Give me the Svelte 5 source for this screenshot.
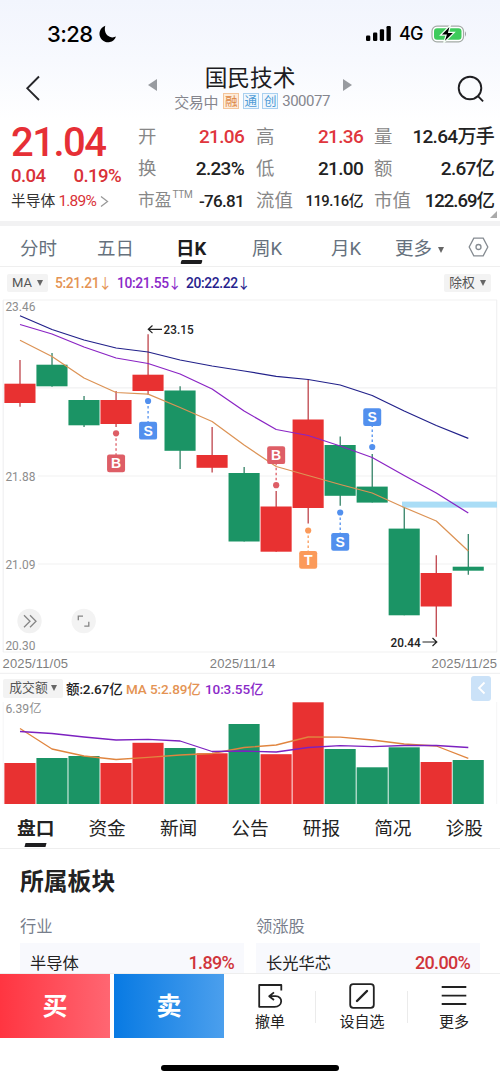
<script>
  const RED = '#e83131';
  const GREEN = '#1b9465';
  const cx = (i) => 20 + i * 32.02;

  // [color, open/close top, bottom, high, low, volume top]
  const candles = [
    [RED, 383.7, 403, 360, 406.7, 763],
    [GREEN, 364.7, 386.3, 353, 386.7, 758],
    [GREEN, 400, 425.3, 396, 427, 756],
    [RED, 400, 424, 391, 427, 763],
    [RED, 374.7, 391, 334.3, 394.7, 742.8],
    [GREEN, 390.5, 450.8, 386.3, 469, 748],
    [RED, 455, 467.8, 427, 472.5, 753.3],
    [GREEN, 473, 541.5, 467, 541.5, 724],
    [RED, 506.5, 551.7, 491, 551.7, 754.2],
    [RED, 419.5, 508, 379, 523.5, 702.3],
    [GREEN, 445, 495.8, 436.5, 505.7, 749],
    [GREEN, 486.6, 502.6, 454, 502.6, 767.3],
    [GREEN, 528.6, 615.3, 507.3, 615.3, 747.3],
    [RED, 573, 606.5, 555.3, 636.8, 762],
    [GREEN, 566.7, 570.7, 534, 574.7, 760]
  ];

  const line = (ys) => ys.map((y, i) => `${cx(i).toFixed(1)},${y}`).join(' ');
  const ma20 = line([315.7, 329.5, 340, 348, 352, 360, 366, 371, 376.3, 379.5, 385, 395.5, 411, 425.5, 438.3]);
  const ma10 = line([324.5, 334, 347, 358, 363.5, 374, 389, 411, 429.5, 435.5, 446, 457.5, 475.5, 493, 513]);
  const ma5 = line([340.3, 356.5, 378, 392.5, 394.2, 407.5, 421.5, 445, 466.5, 475.5, 484.5, 493, 507.5, 521, 551]);
  const vol5 = line([728.5, 749, 756, 759.5, 757.3, 755, 753.5, 747.5, 745, 737, 737.2, 740, 744, 746, 758.3]);
  const vol10 = line([731.5, 733.5, 737, 740, 739.3, 741, 751.5, 751, 752, 747.5, 745.7, 746.7, 745.5, 745.5, 747.5]);

  // letter, candle index, box top, dot y, color
  const marks = [
    ['B', 3, 454.4, 433.3, '#de5e66'],
    ['S', 4, 421.8, 401, '#5290ee'],
    ['B', 8, 446.3, 485.2, '#de5e66'],
    ['T', 9, 551, 530.5, '#fb9a5a'],
    ['S', 10, 533, 512.5, '#5290ee'],
    ['S', 11, 408.2, 447, '#5290ee']
  ];

  const prices = [['23.46', 311], ['21.88', 480.7], ['21.09', 568.9], ['20.30', 650.2]];
  const infoTabs = ['盘口', '资金', '新闻', '公告', '研报', '简况', '诊股'];
</script>

<div class="page">
  <div class="status">
    <span class="time">3:28</span>
    <svg class="moon" width="18" height="18" viewBox="0 0 18 18"><path d="M6.3 .7A8.5 8.5 0 1 0 17 11.6C11.5 14.5 3.8 9.5 6.3 .7Z" fill="#000"/></svg>
    <svg class="signal" width="27" height="17" viewBox="0 0 27 17"><rect x="1" y="10.5" width="4.3" height="5.5" rx="1.2"/><rect x="8" y="7.5" width="4.3" height="8.5" rx="1.2"/><rect x="14.8" y="4.3" width="4.3" height="11.7" rx="1.2"/><rect x="21.5" y="1" width="4.3" height="15" rx="1.2"/></svg>
    <span class="net">4G</span>
    <svg class="battery" width="37" height="20" viewBox="0 0 37 20"><rect x="1" y="2.2" width="31.5" height="15.6" rx="5" fill="#fff" stroke="#a3aaa5" stroke-width="1.2"/><rect x="3" y="4.2" width="27.5" height="11.6" rx="3" fill="#3ecb5c"/><path d="M34 7.3q2 2.7 0 5.4Z" fill="#9a9fa2"/><path d="M19.5 1 9.5 11.2h5.6L12.6 19 23.3 8.4h-5.6Z" fill="#000" stroke="#f4fff6" stroke-width="1.2"/></svg>
  </div>

  <header>
    <svg class="back" width="16" height="28" viewBox="0 0 16 28"><path d="M14 2.5 2.3 14.3 14 26" fill="none" stroke="#26262a" stroke-width="1.9"/></svg>
    <i class="prev"></i>
    <div class="title">
      <h1>国民技术</h1>
      <p><span>交易中</span><b class="tag orange">融</b><b class="tag">通</b><b class="tag">创</b><span class="code">300077</span></p>
    </div>
    <i class="next"></i>
    <svg class="search" width="28" height="28" viewBox="0 0 28 28" fill="none" stroke="#1f1f22" stroke-width="1.9"><circle cx="13" cy="13" r="11.3"/><path d="m20.7 20.8 5.4 5.5"/></svg>
  </header>

  <section class="quote">
    <div class="last">
      <strong>21.04</strong>
      <div class="change"><span>0.04</span><span>0.19%</span></div>
      <div class="industry">半导体<em>1.89%</em><svg width="9" height="13" viewBox="0 0 9 13"><path d="m1 1.5 6.5 5L1 11.5" fill="none" stroke="#999" stroke-width="1.3"/></svg></div>
    </div>
    <dl class="c1">
      <div><dt>开</dt><dd class="up">21.06</dd></div>
      <div><dt>换</dt><dd>2.23%</dd></div>
      <div><dt class="pe">市盈<sup>TTM</sup></dt><dd class="mid">-76.81</dd></div>
    </dl>
    <dl class="c2">
      <div><dt>高</dt><dd class="up">21.36</dd></div>
      <div><dt>低</dt><dd>21.00</dd></div>
      <div><dt>流值</dt><dd class="small">119.16亿</dd></div>
    </dl>
    <dl class="c3">
      <div><dt>量</dt><dd>12.64万手</dd></div>
      <div><dt>额</dt><dd>2.67亿</dd></div>
      <div><dt>市值</dt><dd class="cap">122.69亿</dd></div>
    </dl>
    <i class="corner"></i>
  </section>

  <nav class="periods">
    <span>分时</span><span>五日</span><span class="active">日K</span><span>周K</span><span>月K</span>
    <span class="more">更多 <i class="tri"></i></span>
    <svg width="21" height="20" viewBox="0 0 21 20" fill="none" stroke="#858b91" stroke-width="1.3"><path d="M5.8 1.2h9.4L19.8 10l-4.6 8.8H5.8L1.2 10Z"/><circle cx="10.5" cy="10" r="2.5"/></svg>
  </nav>

  <div class="indicator">
    <span class="chip ma">MA<i class="tri"></i></span>
    <span class="v5">5:21.21<u>↓</u></span><span class="v10">10:21.55<u>↓</u></span><span class="v20">20:22.22<u>↓</u></span>
    <span class="chip right">除权<i class="tri"></i></span>
  </div>

  <svg class="chart" width="500" height="375" viewBox="0 299 500 375">
    <g stroke="#f1f1f2" stroke-width="1.2">
      <path d="M3 300H497M3 387.8H497M38 476H497M38 564H497M3 652H497M0 673.4H500M3.2 300V652M496.7 300V652" fill="none"/>
    </g>
    {#each prices as [text, y]}
      <text class="axis" x="5.4" {y} textLength="30" lengthAdjust="spacingAndGlyphs">{text}</text>
    {/each}
    <rect x="402" y="501.6" width="95" height="6" fill="#aaddf6"/>
    {#each candles as [color, top, bottom, high, low], i}
      <path d="M{cx(i)} {high}V{low}" stroke={color === RED ? '#b9343c' : '#23785a'} stroke-width="1.2"/>
      <rect x={cx(i) - 15.6} y={top} width="31.1" height={bottom - top} fill={color}/>
    {/each}
    <g fill="none" stroke-width="1.25" stroke-linejoin="round">
      <polyline points={ma20} stroke="#22218a"/>
      <polyline points={ma10} stroke="#8a24c4"/>
      <polyline points={ma5} stroke="#dc9355"/>
    </g>
    {#each marks as [letter, i, top, dot, color]}
      <path d="M{cx(i)} {dot}V{top + 9}" stroke={color} stroke-width="1.3" stroke-dasharray="2.5 2.5"/>
      <circle cx={cx(i)} cy={dot} r="3.1" fill={color}/>
      <rect x={cx(i) - 9} y={top} width="18" height="17.8" rx="2.2" fill={color}/>
      <text class="mark" x={cx(i)} y={top + 14}>{letter}</text>
    {/each}
    <g fill="none" stroke="#222" stroke-width="1.2">
      <path d="M162 329.3H148.5M152.5 325.5L148.3 329.3L152.5 333.1"/>
      <path d="M422.5 642H436.5M432.5 638L436.8 642L432.5 646"/>
    </g>
    <text class="extreme" x="163.6" y="333.6" textLength="30" lengthAdjust="spacingAndGlyphs">23.15</text>
    <text class="extreme" x="390.6" y="646.7" textLength="30" lengthAdjust="spacingAndGlyphs">20.44</text>
    <circle cx="29.5" cy="621" r="12.2" fill="#f1f1f1"/><circle cx="83.7" cy="621" r="12.2" fill="#f3f3f3"/>
    <g fill="none" stroke="#858585" stroke-width="1.3">
      <path d="m24 615.2 6 6-6 6m6-12 6 6-6 6"/>
      <path d="M78.3 620.2V616.2H83M84.3 626.2H88.8V621.8"/>
    </g>
    <g class="date">
      <text x="2.5" y="667.8" textLength="65.5">2025/11/05</text>
      <text x="209.8" y="667.8" textLength="65.5">2025/11/14</text>
      <text x="431.6" y="667.8" textLength="65.5">2025/11/25</text>
    </g>
  </svg>

  <div class="volbar">
    <span class="chip vol">成交额<i class="tri"></i></span>
    <b>额:2.67亿</b><span class="v5">MA 5:2.89亿</span><span class="v10">10:3.55亿</span>
    <button aria-label="收起"><svg width="9" height="14" viewBox="0 0 9 14"><path d="M7.5 1.5 2 7l5.5 5.5" fill="none" stroke="#fff" stroke-width="1.8"/></svg></button>
  </div>

  <svg class="volume" width="500" height="102" viewBox="0 702 500 102">
    <path d="M3.2 702V804M496.7 702V804" stroke="#f5f5f6"/>
    <text class="axis" x="5.4" y="713.3" textLength="36" lengthAdjust="spacingAndGlyphs">6.39亿</text>
    {#each candles as [color, , , , , top], i}
      <rect x={cx(i) - 15.6} y={top} width="31.1" height={804 - top} fill={color}/>
    {/each}
    <g fill="none" stroke-width="1.3" stroke-linejoin="round">
      <polyline points={vol5} stroke="#e0853f"/>
      <polyline points={vol10} stroke="#7c21c0"/>
    </g>
  </svg>

  <nav class="info">
    {#each infoTabs as tab, i}<span class:active={i === 0}>{tab}</span>{/each}
  </nav>

  <section class="sector">
    <h2>所属板块</h2>
    <div class="cols">
      <div><h3>行业</h3><p><span>半导体</span><em>1.89%</em></p></div>
      <div><h3>领涨股</h3><p><span>长光华芯</span><em>20.00%</em></p></div>
    </div>
  </section>

  <footer>
    <div class="actions">
      <div class="buy">买</div>
      <div class="sell">卖</div>
      <div class="tool t1">
        <svg width="26" height="26" viewBox="0 0 26 26" fill="none" stroke="#222" stroke-width="1.8"><path d="M24.3 7.5V2H2.2v21.8h15.3c8.5 0 9-10.6 1-10.6h-6m4.5-3.8-4.8 3.8 4.8 3.8" stroke-linejoin="round"/></svg>
        <span>撤单</span>
      </div>
      <div class="tool t2">
        <svg width="26" height="26" viewBox="0 0 26 26" fill="none" stroke="#222" stroke-width="1.8"><rect x="1.2" y="1.2" width="23.6" height="23.6" rx="3"/><path d="m8 18 10-10" stroke-width="2.4" stroke-linecap="round"/></svg>
        <span>设自选</span>
      </div>
      <div class="tool t3">
        <svg width="26" height="26" viewBox="0 0 26 26" fill="none" stroke="#222" stroke-width="1.9"><path d="M.7 4H25.3M.7 12.6h24.6M.7 21h24.6"/></svg>
        <span>更多</span>
      </div>
    </div>
    <div class="home"></div>
  </footer>
</div>

<style>
  :global(body) { margin: 0; background: #fff; }
  .page { width: 500px; height: 1082px; overflow: hidden; display: flex; flex-direction: column; background: linear-gradient(#f2f5fd 0, #f7f9fe 60px, #fff 125px); color: #222; font-family: Roboto, "Noto Sans CJK SC", sans-serif; }
  .page > * { flex-shrink: 0; box-sizing: border-box; }
  h1, h2, h3, p, dl, dd { margin: 0; font-weight: 400; }
  em { font-style: normal; }
  svg { display: block; flex-shrink: 0; }

  .status { height: 67px; display: flex; align-items: center; padding-left: 47px; color: #000; }
  .time { width: 47px; font: 500 22px/24px Inter, sans-serif; letter-spacing: -.6px; }
  .moon { margin-left: 5px; }
  .signal { margin-left: 248px; fill: #000; }
  .net { margin-left: 7px; width: 32px; font: 500 18px/20px Inter, sans-serif; letter-spacing: -.8px; }

  header { height: 53px; display: flex; align-items: flex-start; padding-left: 25px; }
  .back { margin-top: 7px; }
  .prev, .next { width: 0; height: 0; margin-top: 12px; border: solid transparent; border-width: 6.5px 0; }
  .prev { margin-left: 107px; border-right: 9px solid #989ba0; }
  .title { width: 190px; display: flex; flex-direction: column; align-items: center; }
  .next { border-left: 9px solid #989ba0; margin-left: -4px; }
  .search { margin-left: 105px; margin-top: 8px; }
  h1 { font-size: 22.7px; line-height: 24px; margin: 0 4px 0 0; font-weight: 400; color: #1c1c22; }
  .title p { display: flex; align-items: center; height: 20px; font-size: 15px; color: #85868e; letter-spacing: -.3px; }
  .tag { box-sizing: border-box; width: 16px; height: 16px; margin-left: 3.5px; border: 1px solid #a9d0f0; background: #f0f7fd; color: #4d9bd6; font: 400 12.5px/14px "Noto Sans CJK SC", sans-serif; text-align: center; letter-spacing: 0; }
  .tag.orange { border-color: #f4c49a; background: #fdebd9; color: #dc8540; margin-left: 5px; }
  .code { margin-left: 4px; letter-spacing: -.5px; }

  .quote { height: 106px; position: relative; display: flex; padding: 1px 6px 0 11px; border-bottom: 5px solid #f2f2f3; background: #fff; }
  .last { width: 127px; }
  .last strong { display: block; height: 42px; font-size: 40px; line-height: 43px; font-weight: 500; letter-spacing: -1.5px; color: #e62f36; }
  .change { width: 110px; display: flex; justify-content: space-between; margin-top: 1px; font-size: 18.6px; line-height: 24px; letter-spacing: -.6px; font-weight: 500; color: #d93238; }
  .industry { display: flex; align-items: center; margin-top: 2px; font-size: 14.8px; line-height: 23px; color: #333; }
  .industry em { margin: 0 4px 0 3px; color: #d93238; font-size: 15.5px; letter-spacing: -.8px; }
  dl { display: flex; flex-direction: column; }
  dl div { display: flex; align-items: center; justify-content: space-between; height: 32px; white-space: nowrap; }
  .c1 { width: 106px; margin-right: 12px; }
  .c2 { width: 107px; margin-right: 11px; }
  .c3 { width: 120px; }
  dt { font-size: 18.4px; color: #878787; line-height: 30px; }
  dd { font-size: 19px; line-height: 30px; font-weight: 500; letter-spacing: -.7px; color: #222; }
  dd.up { color: #e0363d; }
  .pe { font-size: 16.7px; display: flex; }
  sup { font-size: 10px; line-height: 18px; margin-left: 1px; letter-spacing: -.2px; }
  dd.mid { font-size: 17px; }
  dd.small { font-size: 14.8px; letter-spacing: -.5px; }
  dd.cap { font-size: 18.5px; letter-spacing: -1px; }
  .corner { position: absolute; right: 3px; bottom: 3px; border-left: 7px solid transparent; border-bottom: 7px solid #aaa; }

  .periods { height: 41px; display: flex; align-items: center; padding: 2px 0 0 20px; border-bottom: 1px solid #efefef; background: #fff; font-size: 18.5px; color: #66717d; white-space: nowrap; }
  .periods span { width: 39px; margin-right: 38px; }
  .periods .active { position: relative; width: 32px; margin-left: 2px; margin-right: 44px; color: #1d1d1f; font-weight: 700; }
  .periods .active::after { content: ""; position: absolute; left: 5px; bottom: -4px; width: 21px; height: 4px; border-radius: 1px; background: #1d1d1f; transform: skewX(-15deg); }
  .periods span:nth-child(4) { margin-right: 40px; }
  .periods span:nth-child(5) { margin-right: 25px; }
  .periods .more { width: 56px; margin-right: 17px; }
  .tri { display: inline-block; border: solid transparent; border-width: 6px 3.2px 0; border-top-color: #666; vertical-align: 2px; margin-left: 1px; }

  .indicator { height: 32px; display: flex; align-items: center; padding: 0 9px 0 7px; background: #fff; font-size: 13.8px; font-weight: 500; letter-spacing: -.35px; white-space: nowrap; }
  .chip { box-sizing: border-box; display: flex; align-items: center; justify-content: center; height: 18px; line-height: 18px; border-radius: 2px; background: #f3f3f3; color: #555; font-weight: 400; letter-spacing: 0; }
  .chip .tri { margin-left: 5px; }
  .chip.ma { width: 41px; font-size: 13px; margin-right: 7px; }
  .chip.right { width: 47px; margin-left: auto; font-size: 12.8px; }
  .indicator u { display: inline-block; width: 8px; margin-left: 2px; text-decoration: none; font: 400 14px/14px "Noto Sans CJK SC", sans-serif; text-indent: -3px; }
  .indicator .v5 { width: 62px; }
  .indicator .v10 { width: 69px; }
  .v5 { color: #e49353; }
  .v10 { color: #8a29c8; }
  .v20 { color: #26228d; }

  .chart, .volume { background: #fff; font-family: Roboto, "Noto Sans CJK SC", sans-serif; }
  .axis { font-size: 12px; fill: #8d8d8d; }
  .extreme { font-size: 12.5px; font-weight: 500; fill: #222; }
  .mark { font: 700 14px "Liberation Sans", sans-serif; fill: #fff; text-anchor: middle; }
  .date { font: 13px "Liberation Sans", sans-serif; fill: #7f7f7f; }

  .volbar { height: 28px; display: flex; align-items: center; padding: 0 9px 0 3px; background: #fff; font-size: 13.5px; white-space: nowrap; letter-spacing: -.1px; }
  .chip.vol { width: 60px; height: 19px; font-size: 12.8px; line-height: 18px; }
  .chip.vol .tri { margin-left: 3px; }
  .volbar b { width: 58px; margin-left: 3px; font-weight: 500; }
  .volbar .v5 { width: 75px; margin-left: 2px; font-weight: 500; }
  .volbar .v10 { margin-left: 4px; font-weight: 500; }
  button { display: flex; align-items: center; justify-content: center; width: 20px; height: 25px; margin-left: auto; padding: 0; border: 0; border-radius: 3px; background: #cbe2f8; }

  .info { height: 45px; display: flex; justify-content: space-between; padding: 10px 17px 0 17px; border-bottom: 1px solid #eee; background: #fff; font-size: 18.7px; line-height: 30px; }
  .info .active { position: relative; font-weight: 700; }
  .info .active::after { content: ""; position: absolute; left: 8px; bottom: 1px; width: 21px; height: 4px; background: #1d1d1f; transform: skewX(-15deg); }

  .sector { height: 124px; padding: 15px 20px 0; overflow: hidden; background: #fff; }
  h2 { font-size: 23.8px; line-height: 36px; font-weight: 700; }
  .cols { display: grid; grid-template-columns: 224px 224px; gap: 12px; margin-top: 15px; }
  h3 { font-size: 16.3px; line-height: 24px; color: #777e8c; }
  .cols p { display: flex; align-items: center; justify-content: space-between; height: 38px; margin-top: 4px; padding: 0 10px; background: #f8f9fd; font-size: 16.3px; }
  .cols em { color: #d0353b; font-size: 18px; letter-spacing: -.7px; font-weight: 500; }

  footer { height: 109px; background: #fff; border-top: 1px solid #eee; }
  .actions { display: flex; height: 64px; }
  .buy, .sell { box-sizing: border-box; width: 110px; padding-top: 2px; text-align: center; color: #fff; font-size: 25px; line-height: 62px; font-weight: 700; }
  .buy { background: linear-gradient(90deg, #ff3541, #ff6672); margin-right: 4px; }
  .sell { background: linear-gradient(90deg, #087ae3, #4b9fed); }
  .tool { display: flex; flex-direction: column; align-items: center; padding-top: 9px; width: 92px; box-sizing: border-box; font-size: 15px; line-height: 22px; }
  .tool span { margin-top: 2px; }
  .t1, .t2 { background: linear-gradient(#ebebeb, #ebebeb) right 17px / 1px 32px no-repeat; }
  .home { width: 178px; height: 6px; margin: 27px auto 0; border-radius: 3px; background: #000; }
</style>
